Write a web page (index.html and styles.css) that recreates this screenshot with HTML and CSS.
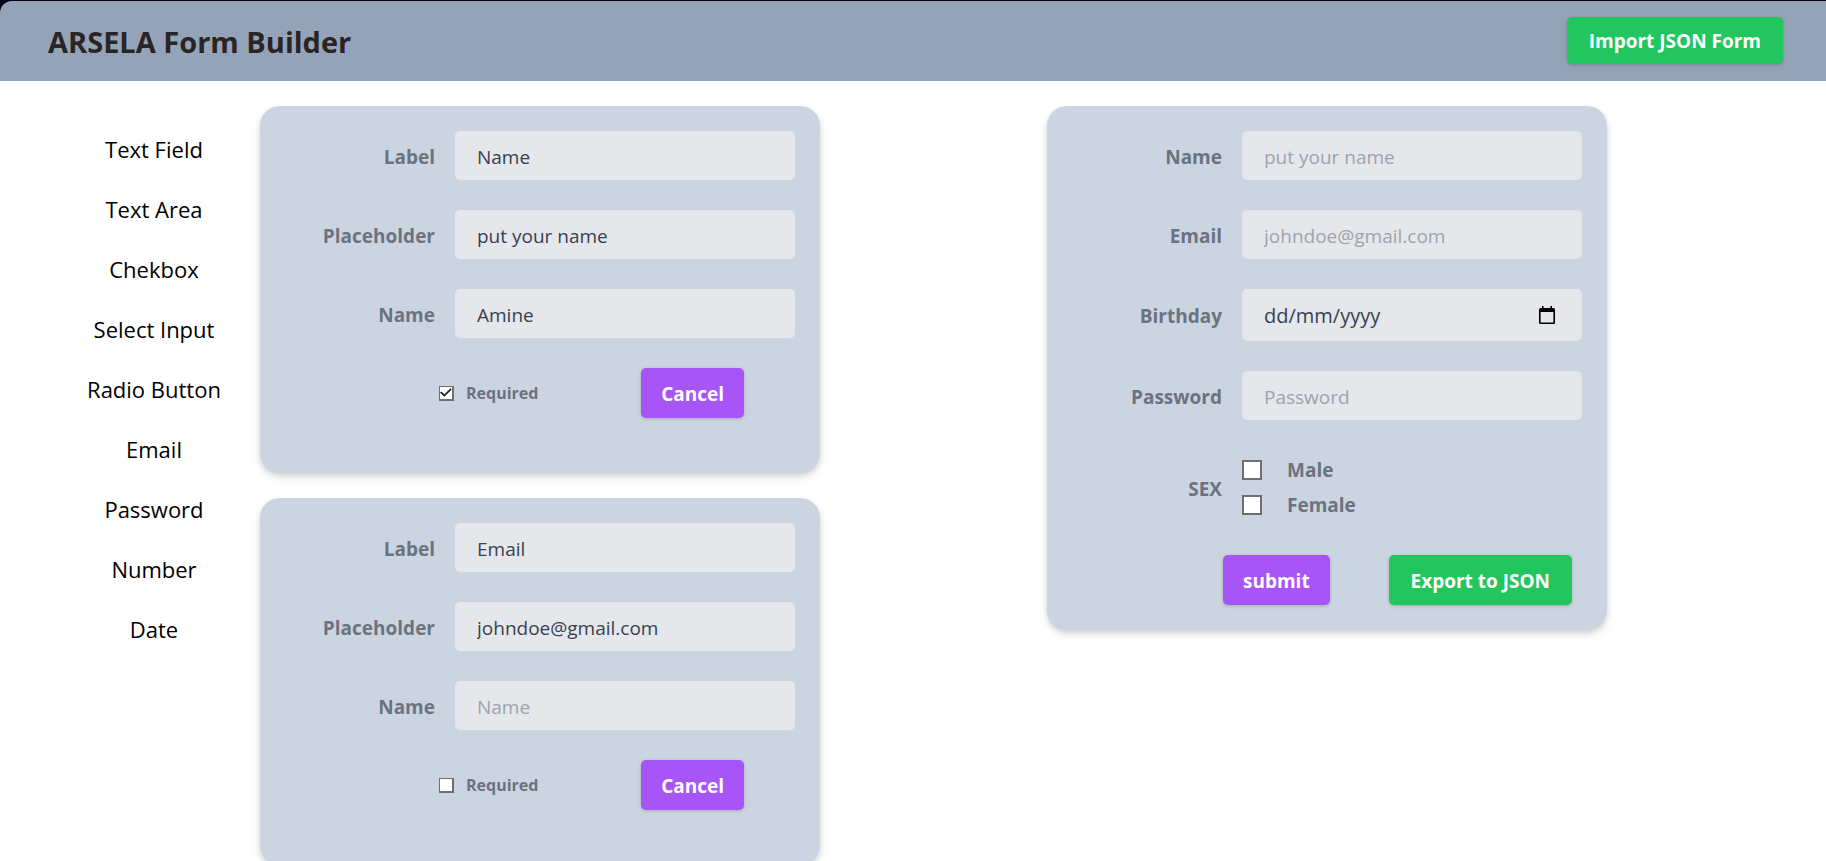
FILE: index.html
```html
<!DOCTYPE html>
<html lang="en">
<head>
  <meta charset="utf-8">
  <meta name="viewport" content="width=device-width, initial-scale=1">
  <title>ARSELA Form Builder</title>
  <link rel="stylesheet" href="styles.css">
</head>
<body>
  <div class="top-edge">
    <header class="header">
      <h1 class="title">ARSELA Form Builder</h1>
      <button class="btn btn-green btn-import" type="button">Import JSON Form</button>
    </header>
  </div>

  <main class="workspace">
    <ul class="palette">
      <li class="palette-item">Text Field</li>
      <li class="palette-item">Text Area</li>
      <li class="palette-item">Chekbox</li>
      <li class="palette-item">Select Input</li>
      <li class="palette-item">Radio Button</li>
      <li class="palette-item">Email</li>
      <li class="palette-item">Password</li>
      <li class="palette-item">Number</li>
      <li class="palette-item">Date</li>
    </ul>

    <section class="editors">
      <form class="card editor">
        <div class="row">
          <label class="label" for="f1-label">Label</label>
          <input class="input" id="f1-label" type="text" placeholder="Label" value="Name">
        </div>
        <div class="row">
          <label class="label" for="f1-placeholder">Placeholder</label>
          <input class="input" id="f1-placeholder" type="text" placeholder="Placeholder" value="put your name">
        </div>
        <div class="row">
          <label class="label" for="f1-name">Name</label>
          <input class="input" id="f1-name" type="text" placeholder="Name" value="Amine">
        </div>
        <div class="editor-footer">
          <label class="required"><input class="check" type="checkbox" checked>Required</label>
          <button class="btn btn-purple" type="button">Cancel</button>
        </div>
      </form>

      <form class="card editor">
        <div class="row">
          <label class="label" for="f2-label">Label</label>
          <input class="input" id="f2-label" type="text" placeholder="Label" value="Email">
        </div>
        <div class="row">
          <label class="label" for="f2-placeholder">Placeholder</label>
          <input class="input" id="f2-placeholder" type="text" placeholder="Placeholder" value="johndoe@gmail.com">
        </div>
        <div class="row">
          <label class="label" for="f2-name">Name</label>
          <input class="input" id="f2-name" type="text" placeholder="Name">
        </div>
        <div class="editor-footer">
          <label class="required"><input class="check" type="checkbox">Required</label>
          <button class="btn btn-purple" type="button">Cancel</button>
        </div>
      </form>
    </section>

    <section class="preview">
      <form class="card">
        <div class="row">
          <label class="label" for="p-name">Name</label>
          <input class="input" id="p-name" type="text" placeholder="put your name">
        </div>
        <div class="row">
          <label class="label" for="p-email">Email</label>
          <input class="input" id="p-email" type="email" placeholder="johndoe@gmail.com">
        </div>
        <div class="row">
          <label class="label" for="p-birthday">Birthday</label>
          <div class="date-field">
            <input class="date-input" id="p-birthday" type="text" inputmode="numeric" placeholder="dd/mm/yyyy">
            <button class="date-button" type="button" aria-label="Open calendar">
              <svg width="18" height="20" viewBox="0 0 18 20" aria-hidden="true">
                <path d="M4 0h1.600v2h6.800V0H14v2h1.500A1.500 1.500 0 0 1 17 3.500v13a1.500 1.500 0 0 1-1.500 1.500h-13A1.500 1.500 0 0 1 1 16.500v-13A1.500 1.500 0 0 1 2.500 2H4zM2.600 6v10.400h12.800V6z" fill="#000" fill-rule="evenodd"/>
              </svg>
            </button>
          </div>
        </div>
        <div class="row">
          <label class="label" for="p-password">Password</label>
          <input class="input" id="p-password" type="password" placeholder="Password">
        </div>
        <div class="row" role="group" aria-labelledby="p-sex">
          <span class="label" id="p-sex">SEX</span>
          <div class="options">
            <label class="option"><input class="check check-large" type="checkbox">Male</label>
            <label class="option"><input class="check check-large" type="checkbox">Female</label>
          </div>
        </div>
        <div class="preview-footer">
          <button class="btn btn-purple" type="submit">submit</button>
          <button class="btn btn-green" type="button">Export to JSON</button>
        </div>
      </form>
    </section>
  </main>
</body>
</html>
```
FILE: styles.css
```css
*,
*::before,
*::after {
  box-sizing: border-box;
}

body {
  margin: 0;
  height: 100vh;
  display: flex;
  flex-direction: column;
  background: #fff;
  color: #000;
  font-family: "Segoe UI", "Open Sans", "Noto Sans", sans-serif;
  font-size: 19px;
  line-height: 30px;
}

button,
input {
  font: inherit;
}

/* Header */
.top-edge {
  flex: none;
  padding-top: 1px;
  background: #050414;
}

.header {
  display: flex;
  align-items: center;
  justify-content: space-between;
  min-height: 80px;
  padding: 0 43px 2px 48px;
  background: #94a3b8;
  border-top-left-radius: 12px;
}

.title {
  margin: 0;
  padding-top: 4px;
  color: #292524;
  font-size: 29px;
  font-weight: 700;
  line-height: 40px;
}

/* Buttons */
.btn {
  padding: 11px 20px 9px;
  border: 0;
  border-radius: 5px;
  color: #fff;
  font-weight: 700;
  box-shadow: 0 1px 4px rgba(0, 0, 0, 0.1), 0 1px 3px rgba(0, 0, 0, 0.1);
  cursor: pointer;
}

.btn-green {
  padding-right: 22px;
  padding-left: 22px;
  background: #22c55e;
}

.btn-import {
  padding-top: 9px;
  padding-bottom: 8px;
}

.btn-purple {
  background: #a855f7;
}

/* Workspace */
.workspace {
  flex: 1;
  min-height: 0;
  display: grid;
  grid-template-columns: 260px minmax(0, 560px) minmax(0, 1fr);
  align-items: start;
  overflow-y: auto;
  scrollbar-width: none;
}

.palette {
  display: flex;
  flex-direction: column;
  gap: 30px;
  margin: 0;
  padding: 53px 0 0 48px;
  list-style: none;
}

.palette-item {
  font-size: 22px;
  text-align: center;
  cursor: grab;
}

.editors {
  display: flex;
  flex-direction: column;
  gap: 25px;
  padding: 25px 0;
}

.preview {
  display: flex;
  justify-content: center;
  padding: 25px 0 25px 8px;
}

.card {
  width: 100%;
  max-width: 560px;
  display: flex;
  flex-direction: column;
  gap: 30px;
  padding: 25px;
  border-radius: 20px;
  background: #cbd5e1;
  box-shadow: 0 5px 8px rgba(0, 0, 0, 0.1), 0 2px 5px rgba(0, 0, 0, 0.1);
}

.editor {
  padding-bottom: 55px;
}

/* Fields */
.row {
  display: grid;
  grid-template-columns: 1fr 2fr;
  align-items: center;
}

.label {
  padding: 2px 20px 0 0;
  color: #6b7280;
  font-weight: 700;
  text-align: right;
}

.input,
.date-field {
  width: 100%;
  min-width: 0;
  height: 49px;
  padding: 2px 22px 0;
  border: 0;
  border-radius: 5px;
  background: #e5e7eb;
  color: #374151;
}

.input::placeholder {
  color: #9ca3af;
  opacity: 1;
}

.date-field {
  display: flex;
  align-items: center;
  height: 52px;
}

.date-input {
  flex: 1;
  min-width: 0;
  padding: 0;
  border: 0;
  background: transparent;
  color: #374151;
  font-size: 20px;
}

.date-input::placeholder {
  color: #374151;
  opacity: 1;
}

.date-button {
  display: flex;
  padding: 0 4px;
  border: 0;
  background: transparent;
}

/* Checkboxes */
.check {
  flex: none;
  display: grid;
  place-items: center;
  width: 15px;
  height: 15px;
  margin: 0;
  border: 1px solid #6f6f6f;
  border-right-width: 2px;
  border-bottom-width: 2px;
  background: #fff;
  appearance: none;
}

.check:checked::after {
  content: "";
  width: 12px;
  height: 10px;
  background: #222;
  clip-path: polygon(0 52%, 10% 40%, 36% 68%, 88% 8%, 98% 20%, 36% 92%);
}

.check-large {
  width: 20px;
  height: 20px;
  border-width: 2px;
}

.editor-footer {
  display: flex;
  align-items: center;
  justify-content: space-between;
  padding: 0 51px 0 154px;
}

.required {
  display: flex;
  align-items: center;
  gap: 12px;
  color: #6b7280;
  font-size: 16px;
  font-weight: 700;
}

.options {
  display: flex;
  flex-direction: column;
  gap: 5px;
  padding: 5px 0;
}

.option {
  display: flex;
  align-items: center;
  gap: 25px;
  color: #6b7280;
  font-weight: 700;
}

.preview-footer {
  display: flex;
  align-items: center;
  justify-content: space-between;
  padding: 0 10px 0 151px;
}

@media (max-width: 1200px) {
  .workspace {
    grid-template-columns: 240px minmax(0, 1fr);
  }

  .preview {
    grid-column: 2;
    justify-content: flex-start;
    padding-left: 0;
  }
}
```
